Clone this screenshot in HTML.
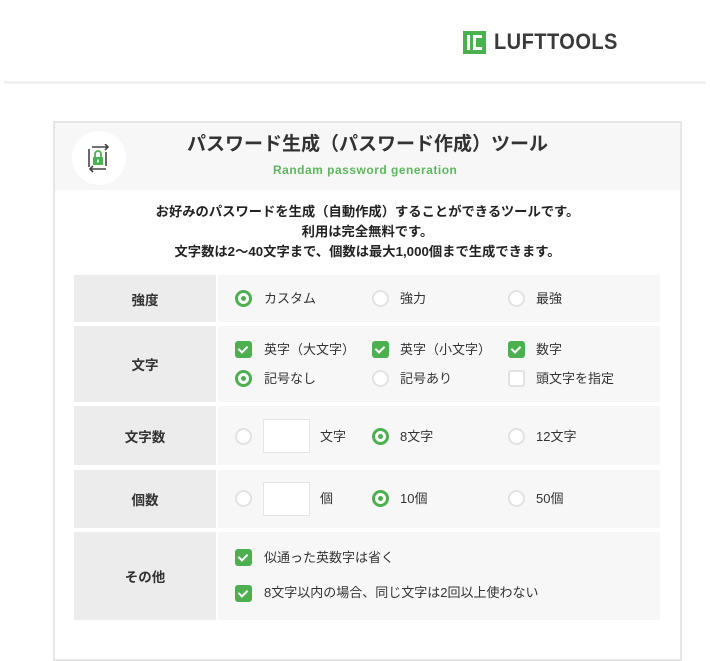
<!DOCTYPE html>
<html><head><meta charset="utf-8"><style>
*{margin:0;padding:0;box-sizing:border-box}
body{width:710px;height:642px;background:#fff;position:relative;overflow:hidden;font-family:"Liberation Sans","Noto Sans CJK JP",sans-serif;color:#333}
.a{position:absolute}
.hl{left:4px;top:81px;width:702px;height:3px;background:#f1f1f1}
.card{left:53px;top:121px;width:629px;height:540px;border:2px solid #e6e6e6;background:#fff}
.chead{left:55px;top:123px;width:625px;height:67px;background:#f7f7f7}
.circ{left:72px;top:131px;width:54px;height:54px;border-radius:50%;background:#fff}
.t{font-size:19px;font-weight:bold;color:#333;white-space:nowrap}
.sub{font-size:12px;font-weight:bold;color:#5cb85c;white-space:nowrap;letter-spacing:.5px}
.d{font-size:13.3px;font-weight:bold;color:#222;width:625px;left:55px;text-align:center;white-space:nowrap}
.lab{left:74px;width:142px;background:#ececec;font-size:13.5px;font-weight:bold;color:#333;display:flex;align-items:center;justify-content:center}
.val{left:218px;width:442px;background:#f7f7f7}
.r{width:17px;height:17px;border-radius:50%;border:2px solid #e2e2e2;background:#fff}
.r.on{border:3px solid #4caf50}
.r.on::after{content:"";position:absolute;left:3px;top:3px;width:5px;height:5px;border-radius:50%;background:#4caf50}
.c{width:17px;height:17px;border-radius:3px;background:#4caf50}
.c::after{content:"";position:absolute;left:5px;top:3px;width:4px;height:7px;border:solid #fff;border-width:0 2px 2px 0;transform:rotate(45deg)}
.c.off{background:#fff;border:2px solid #e2e2e2}
.c.off::after{display:none}
.x{font-size:13px;color:#333;white-space:nowrap}
.in{width:47px;height:34px;background:#fff;border:1px solid #e4e4e4}
</style></head><body>
<div class="a" style="left:463px;top:31px;width:23px;height:23px;background:#4caf50"></div>
<div class="a" style="left:467px;top:35px;width:3px;height:15px;background:#fff"></div>
<div class="a" style="left:473px;top:35px;width:9px;height:3px;background:#fff"></div>
<div class="a" style="left:473px;top:35px;width:3px;height:15px;background:#fff"></div>
<div class="a" style="left:473px;top:47px;width:9px;height:3px;background:#fff"></div>
<div class="a" style="left:494px;top:29px;font-size:22px;font-weight:bold;color:#3a3a3a;letter-spacing:0.5px;transform:scaleX(0.91);transform-origin:left">LUFTTOOLS</div>
<div class="a hl"></div>
<div class="a card"></div>
<div class="a chead"></div>
<div class="a circ"></div>
<svg class="a" style="left:86px;top:144px" width="26" height="30" viewBox="0 0 26 30">
<path d="M6 3 H22 M19 0 L22 3 L19 6" stroke="#444" stroke-width="1.6" fill="none"/>
<path d="M3 5 V23 M20 25 H4 M7 22 L4 25 L7 28" stroke="#444" stroke-width="1.6" fill="none"/>
<path d="M20 8 V22" stroke="#444" stroke-width="1.6"/>
<path d="M9 13 V10 a3 3 0 0 1 6 0 V13" stroke="#4caf50" stroke-width="1.8" fill="none"/>
<rect x="7" y="13" width="10" height="8" rx="1" fill="#4caf50"/>
<rect x="11.2" y="15.5" width="1.6" height="3" fill="#fff"/>
</svg>
<div class="a t" style="left:187px;top:129px">パスワード生成（パスワード作成）ツール</div>
<div class="a sub" style="left:273px;top:163px">Randam password generation</div>
<div class="a d" style="top:201px">お好みのパスワードを生成（自動作成）することができるツールです。</div>
<div class="a d" style="top:221px">利用は完全無料です。</div>
<div class="a d" style="top:241px">文字数は2〜40文字まで、個数は最大1,000個まで生成できます。</div>

<div class="a lab" style="top:275px;height:47px">強度</div>
<div class="a val" style="top:275px;height:47px"></div>
<div class="a r on" style="left:235px;top:290px"></div><div class="a x" style="left:264px;top:288px">カスタム</div>
<div class="a r" style="left:372px;top:290px"></div><div class="a x" style="left:400px;top:288px">強力</div>
<div class="a r" style="left:508px;top:290px"></div><div class="a x" style="left:536px;top:288px">最強</div>

<div class="a lab" style="top:326px;height:76px">文字</div>
<div class="a val" style="top:326px;height:76px"></div>
<div class="a c" style="left:235px;top:341px"></div><div class="a x" style="left:264px;top:339px">英字（大文字）</div>
<div class="a c" style="left:372px;top:341px"></div><div class="a x" style="left:400px;top:339px">英字（小文字）</div>
<div class="a c" style="left:508px;top:341px"></div><div class="a x" style="left:536px;top:339px">数字</div>
<div class="a r on" style="left:235px;top:370px"></div><div class="a x" style="left:264px;top:368px">記号なし</div>
<div class="a r" style="left:372px;top:370px"></div><div class="a x" style="left:400px;top:368px">記号あり</div>
<div class="a c off" style="left:508px;top:370px"></div><div class="a x" style="left:536px;top:368px">頭文字を指定</div>

<div class="a lab" style="top:406px;height:59px">文字数</div>
<div class="a val" style="top:406px;height:59px"></div>
<div class="a r" style="left:235px;top:428px"></div><div class="a in" style="left:263px;top:419px"></div><div class="a x" style="left:320px;top:426px">文字</div>
<div class="a r on" style="left:372px;top:428px"></div><div class="a x" style="left:400px;top:426px">8文字</div>
<div class="a r" style="left:508px;top:428px"></div><div class="a x" style="left:536px;top:426px">12文字</div>

<div class="a lab" style="top:470px;height:58px">個数</div>
<div class="a val" style="top:470px;height:58px"></div>
<div class="a r" style="left:235px;top:490px"></div><div class="a in" style="left:263px;top:482px"></div><div class="a x" style="left:320px;top:488px">個</div>
<div class="a r on" style="left:372px;top:490px"></div><div class="a x" style="left:400px;top:488px">10個</div>
<div class="a r" style="left:508px;top:490px"></div><div class="a x" style="left:536px;top:488px">50個</div>

<div class="a lab" style="top:532px;height:88px">その他</div>
<div class="a val" style="top:532px;height:88px"></div>
<div class="a c" style="left:235px;top:549px"></div><div class="a x" style="left:264px;top:547px">似通った英数字は省く</div>
<div class="a c" style="left:235px;top:585px"></div><div class="a x" style="left:264px;top:582px">8文字以内の場合、同じ文字は2回以上使わない</div>
</body></html>
